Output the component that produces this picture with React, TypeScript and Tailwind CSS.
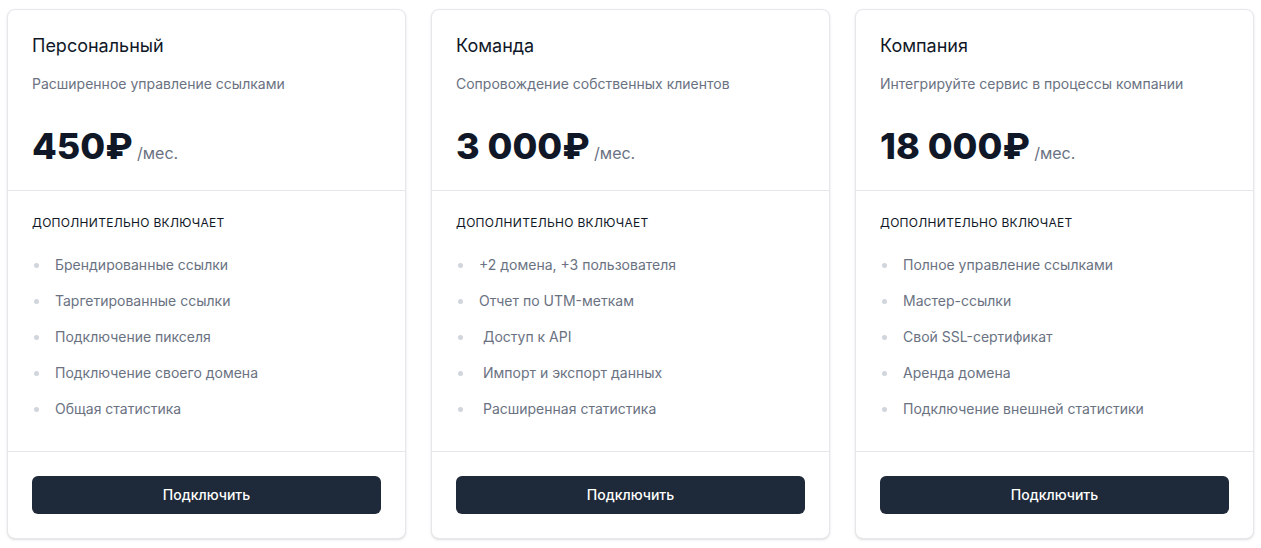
const plans = [
  {
    name: 'Персональный',
    description: 'Расширенное управление ссылками',
    price: '450₽',
    features: [
      'Брендированные ссылки',
      'Таргетированные ссылки',
      'Подключение пикселя',
      'Подключение своего домена',
      'Общая статистика',
    ],
  },
  {
    name: 'Команда',
    description: 'Сопровождение собственных клиентов',
    price: '3 000₽',
    features: [
      '+2 домена, +3 пользователя',
      'Отчет по UTM-меткам',
      '\u00a0Доступ к API',
      '\u00a0Импорт и экспорт данных',
      '\u00a0Расширенная статистика',
    ],
  },
  {
    name: 'Компания',
    description: 'Интегрируйте сервис в процессы компании',
    price: '18 000₽',
    features: [
      'Полное управление ссылками',
      'Мастер-ссылки',
      'Свой SSL-сертификат',
      'Аренда домена',
      'Подключение внешней статистики',
    ],
  },
]

export default function App() {
  return (
    <div className="min-h-screen bg-white font-['Inter',sans-serif]">
      <div className="grid grid-cols-[repeat(3,399px)] gap-[25px] pl-[7px] pt-[9px]">
        {plans.map((plan) => (
          <div key={plan.name} className="divide-y divide-gray-200 rounded-lg border border-gray-200 bg-white shadow-sm">
            {/* Header */}
            <div className="p-6">
              <h2 className="text-lg leading-6 font-normal text-gray-900">{plan.name}</h2>
              <p className="mt-4 text-sm text-gray-500">{plan.description}</p>
              <p className="mt-8">
                <span className="text-4xl font-extrabold text-gray-900">{plan.price}</span>{' '}
                <span className="text-base font-normal text-gray-500">/мес.</span>
              </p>
            </div>

            {/* Features */}
            <div className="px-6 pt-6 pb-8">
              <h3 className="text-xs font-normal tracking-wide text-gray-900 uppercase">Дополнительно включает</h3>
              <ul className="mt-6 space-y-4">
                {plan.features.map((feature) => (
                  <li key={feature} className="flex items-center">
                    <span className="ml-[2px] h-[5px] w-[5px] shrink-0 rounded-full bg-gray-300" />
                    <span className="ml-4 text-sm text-gray-500 whitespace-pre">{feature}</span>
                  </li>
                ))}
              </ul>
            </div>

            {/* Action */}
            <div className="p-6">
              <button className="block w-full rounded-md bg-gray-800 py-[9px] text-center text-sm font-medium text-white">
                Подключить
              </button>
            </div>
          </div>
        ))}
      </div>
    </div>
  )
}
